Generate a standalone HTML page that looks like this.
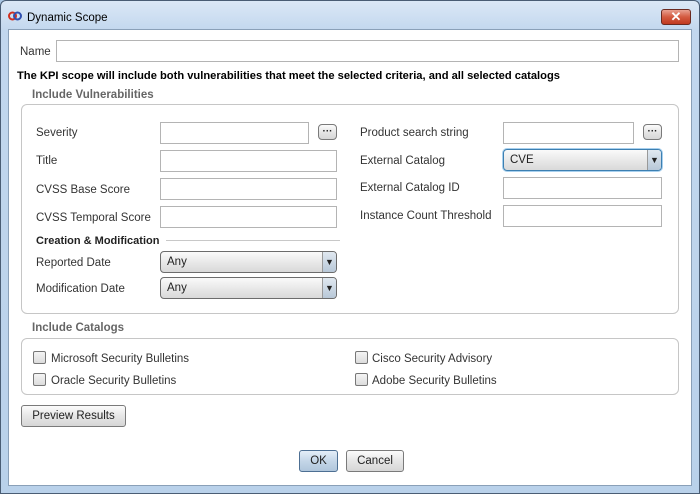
<!DOCTYPE html>
<html><head><style>
*{box-sizing:border-box;margin:0;padding:0}
body{width:700px;height:494px;position:relative;overflow:hidden;font-family:"Liberation Sans",sans-serif;font-size:11.5px;color:#222;background:#a9c6e4}
.a{position:absolute}
.win{left:0;top:0;width:700px;height:494px;border:1px solid #4a5d74;border-radius:6px 6px 0 0;background:linear-gradient(#dbe8f6,#c2d7ee 30px,#b9d1ea)}
.content{left:8px;top:29px;width:684px;height:457px;background:#fff;border:1px solid #8aa0b8}
.inp{position:absolute;border:1px solid #b4b4b4;background:#fff;height:22px}
.lbl{position:absolute;font-size:11.5px;color:#333;line-height:14px}
.btn{position:absolute;border:1px solid #7a7a7a;border-radius:3px;background:linear-gradient(#fbfbfb,#e6e6e6 50%,#d6d6d6);font-size:11.5px;text-align:center;color:#222}
.dots{width:19px;height:16px;border-radius:4px;font-size:10px;line-height:14px;font-weight:bold}
.combo{position:absolute;height:22px;border:1px solid #6c6c6c;border-radius:4px;background:linear-gradient(#fafafa,#e9e9e9 50%,#d9d9d9);padding-left:6px;line-height:20px;font-size:11.5px}
.combo .arr{position:absolute;right:0;top:0;width:14px;height:20px;border-left:1px solid #999;background:linear-gradient(#e0e8f0,#b8c8d8);font-size:9px;text-align:center;line-height:20px;border-radius:0 3px 3px 0}
.grp{position:absolute;border:1px solid #c6c6c6;border-radius:6px;background:#fff}
.gt{position:absolute;font-weight:bold;color:#666;font-size:11.5px}
.cb{position:absolute;width:13px;height:13px;border:1px solid #777;border-radius:2px;background:linear-gradient(#f4f4f4,#dcdcdc)}
</style></head><body>
<div class="a win"></div>
<div class="a" style="left:8px;top:10px;width:14px;height:12px">
<svg width="14" height="12"><circle cx="4.5" cy="6" r="3.5" fill="none" stroke="#d03020" stroke-width="2"/><circle cx="9.5" cy="6" r="3.5" fill="none" stroke="#3050b0" stroke-width="2"/></svg></div>
<div class="lbl" style="left:27px;top:11px;color:#000">Dynamic Scope</div>
<div class="a" style="left:661px;top:9px;width:30px;height:16px;border:1px solid #6b2a20;border-radius:3px;background:linear-gradient(#e8a090,#d35a40 50%,#c03a20);color:#fff;font-weight:bold;text-align:center;line-height:14px;font-size:13px">✕</div>
<div class="a content"></div>

<div class="lbl" style="left:20px;top:45px">Name</div>
<div class="inp" style="left:56px;top:40px;width:623px"></div>
<div class="lbl" style="left:17px;top:69px;font-weight:bold;color:#000;font-size:11.15px">The KPI scope will include both vulnerabilities that meet the selected criteria, and all selected catalogs</div>

<div class="gt" style="left:32px;top:89px">Include Vulnerabilities</div>
<div class="grp" style="left:21px;top:104px;width:658px;height:210px"></div>

<div class="lbl" style="left:36px;top:126px">Severity</div>
<div class="inp" style="left:160px;top:122px;width:149px"></div>
<div class="btn dots" style="left:318px;top:124px">···</div>
<div class="lbl" style="left:36px;top:154px">Title</div>
<div class="inp" style="left:160px;top:150px;width:177px"></div>
<div class="lbl" style="left:36px;top:183px">CVSS Base Score</div>
<div class="inp" style="left:160px;top:178px;width:177px"></div>
<div class="lbl" style="left:36px;top:211px">CVSS Temporal Score</div>
<div class="inp" style="left:160px;top:206px;width:177px"></div>
<div class="lbl" style="left:36px;top:234px;font-weight:bold;color:#222;font-size:11px">Creation &amp; Modification</div>
<div class="a" style="left:166px;top:240px;width:174px;height:1px;background:#c8c8c8"></div>
<div class="lbl" style="left:36px;top:256px">Reported Date</div>
<div class="combo" style="left:160px;top:251px;width:177px">Any<div class="arr">▼</div></div>
<div class="lbl" style="left:36px;top:282px">Modification Date</div>
<div class="combo" style="left:160px;top:277px;width:177px">Any<div class="arr">▼</div></div>

<div class="lbl" style="left:360px;top:126px">Product search string</div>
<div class="inp" style="left:503px;top:122px;width:131px"></div>
<div class="btn dots" style="left:643px;top:124px">···</div>
<div class="lbl" style="left:360px;top:154px">External Catalog</div>
<div class="combo" style="left:503px;top:149px;width:159px;border-color:#3c7fb1;box-shadow:0 0 0 1px #a8d0ee">CVE<div class="arr">▼</div></div>
<div class="lbl" style="left:360px;top:181px">External Catalog ID</div>
<div class="inp" style="left:503px;top:177px;width:159px"></div>
<div class="lbl" style="left:360px;top:209px">Instance Count Threshold</div>
<div class="inp" style="left:503px;top:205px;width:159px"></div>

<div class="gt" style="left:32px;top:322px">Include Catalogs</div>
<div class="grp" style="left:21px;top:338px;width:658px;height:57px"></div>
<div class="cb" style="left:33px;top:351px"></div>
<div class="lbl" style="left:51px;top:352px">Microsoft Security Bulletins</div>
<div class="cb" style="left:33px;top:373px"></div>
<div class="lbl" style="left:51px;top:374px">Oracle Security Bulletins</div>
<div class="cb" style="left:355px;top:351px"></div>
<div class="lbl" style="left:372px;top:352px">Cisco Security Advisory</div>
<div class="cb" style="left:355px;top:373px"></div>
<div class="lbl" style="left:372px;top:374px">Adobe Security Bulletins</div>

<div class="btn" style="left:21px;top:405px;width:105px;height:22px;line-height:20px">Preview Results</div>
<div class="btn" style="left:299px;top:450px;width:39px;height:22px;line-height:20px;background:linear-gradient(#e4eef8,#c4d6e8 50%,#b0c6dc);border-color:#4d6f93">OK</div>
<div class="btn" style="left:346px;top:450px;width:58px;height:22px;line-height:20px">Cancel</div>
</body></html>
